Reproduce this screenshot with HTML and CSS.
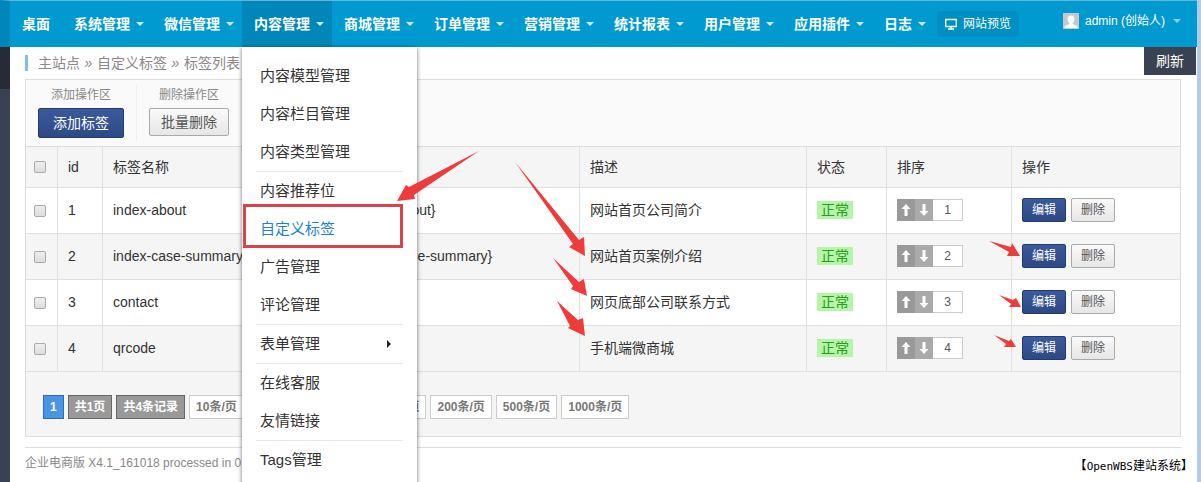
FILE: index.html
```
<!DOCTYPE html>
<html lang="zh-CN">
<head>
<meta charset="utf-8">
<title>标签列表</title>
<link rel="stylesheet" href="styles.css">
</head>
<body>
<div class="app">
  <header class="topbar">
    <nav class="nav">
      <a class="nav-link" href="#">桌面</a>
      <a class="nav-link has-menu" href="#">系统管理</a>
      <a class="nav-link has-menu" href="#">微信管理</a>
      <div class="nav-item">
        <a class="nav-link has-menu active" href="#">内容管理</a>
        <ul class="menu">
          <li><a href="#">内容模型管理</a></li>
          <li><a href="#">内容栏目管理</a></li>
          <li><a href="#">内容类型管理</a></li>
          <li class="divided"><a href="#">内容推荐位</a></li>
          <li class="marked"><a class="current" href="#">自定义标签</a></li>
          <li><a href="#">广告管理</a></li>
          <li><a href="#">评论管理</a></li>
          <li class="divided"><a class="submenu" href="#">表单管理</a></li>
          <li class="divided"><a href="#">在线客服</a></li>
          <li><a href="#">友情链接</a></li>
          <li class="divided"><a href="#">Tags管理</a></li>
        </ul>
      </div>
      <a class="nav-link has-menu" href="#">商城管理</a>
      <a class="nav-link has-menu" href="#">订单管理</a>
      <a class="nav-link has-menu" href="#">营销管理</a>
      <a class="nav-link has-menu" href="#">统计报表</a>
      <a class="nav-link has-menu" href="#">用户管理</a>
      <a class="nav-link has-menu" href="#">应用插件</a>
      <a class="nav-link has-menu" href="#">日志</a>
      <a class="preview" href="#">
        <svg width="12" height="12" viewBox="0 0 12 12" fill="none" stroke="currentColor"><path d="M.7 1.5h10.6v7H.7z" stroke-width="1.3"/><path d="M6 8.500v2M3 11h6" stroke-width="1.5"/></svg>
        网站预览
      </a>
    </nav>
    <a class="user" href="#">
      <svg width="16" height="16" viewBox="0 0 16 16"><path fill="#c4c8ca" d="M0 0h16v16H0z"/><path fill="#fff" d="M8 2.500c2.200 0 3.400 1.500 3.400 3.700 0 1.600-.8 2.900-1.700 3.600v1.200l4 1.800c.7.400.8 1.200.8 2.200h-13c0-1 .1-1.800.8-2.200l4-1.800V9.800C5.400 9.100 4.600 7.800 4.600 6.200 4.600 4 5.800 2.500 8 2.500z"/></svg>
      <span>admin (创始人)</span>
    </a>
  </header>
  <div class="body">
    <aside class="rail"></aside>
    <main class="content">
      <div class="heading">
        <div class="crumbs"><a href="#">主站点</a><i>»</i><a href="#">自定义标签</a><i>»</i><span>标签列表</span></div>
        <button class="refresh" type="button">刷新</button>
      </div>
      <section class="panel">
        <div class="toolbar">
          <div class="tool"><span>添加操作区</span><button class="btn primary large" type="button">添加标签</button></div>
          <div class="tool"><span>删除操作区</span><button class="btn medium" type="button">批量删除</button></div>
        </div>
        <table class="grid">
          <colgroup><col class="c-check"><col class="c-id"><col class="c-name"><col class="c-code"><col class="c-desc"><col class="c-state"><col class="c-sort"><col></colgroup>
          <thead>
            <tr><th><input type="checkbox" aria-label="全选"></th><th>id</th><th>标签名称</th><th></th><th>描述</th><th>状态</th><th>排序</th><th>操作</th></tr>
          </thead>
          <tbody>
            <tr><td><input type="checkbox" aria-label="1"></td><td>1</td><td>index-about</td><td>{index-about}</td><td>网站首页公司简介</td><td><span class="badge">正常</span></td>
              <td><div class="sort"><button type="button" aria-label="上移"><svg width="10" height="12" viewBox="0 0 10 12"><path d="M5 0l4.500 5H6.500v7h-3V5h-3z"/></svg></button><button type="button" aria-label="下移"><svg width="10" height="12" viewBox="0 0 10 12"><path d="M5 12L.5 7h3V0h3v7h3z"/></svg></button><input value="1" aria-label="排序"></div></td>
              <td><div class="actions"><button class="btn primary" type="button">编辑</button><button class="btn" type="button">删除</button></div></td></tr>
            <tr><td><input type="checkbox" aria-label="2"></td><td>2</td><td>index-case-summary</td><td>{index-case-summary}</td><td>网站首页案例介绍</td><td><span class="badge">正常</span></td>
              <td><div class="sort"><button type="button" aria-label="上移"><svg width="10" height="12" viewBox="0 0 10 12"><path d="M5 0l4.500 5H6.500v7h-3V5h-3z"/></svg></button><button type="button" aria-label="下移"><svg width="10" height="12" viewBox="0 0 10 12"><path d="M5 12L.5 7h3V0h3v7h3z"/></svg></button><input value="2" aria-label="排序"></div></td>
              <td><div class="actions"><button class="btn primary" type="button">编辑</button><button class="btn" type="button">删除</button></div></td></tr>
            <tr><td><input type="checkbox" aria-label="3"></td><td>3</td><td>contact</td><td>{contact}</td><td>网页底部公司联系方式</td><td><span class="badge">正常</span></td>
              <td><div class="sort"><button type="button" aria-label="上移"><svg width="10" height="12" viewBox="0 0 10 12"><path d="M5 0l4.500 5H6.500v7h-3V5h-3z"/></svg></button><button type="button" aria-label="下移"><svg width="10" height="12" viewBox="0 0 10 12"><path d="M5 12L.5 7h3V0h3v7h3z"/></svg></button><input value="3" aria-label="排序"></div></td>
              <td><div class="actions"><button class="btn primary" type="button">编辑</button><button class="btn" type="button">删除</button></div></td></tr>
            <tr><td><input type="checkbox" aria-label="4"></td><td>4</td><td>qrcode</td><td>{qrcode}</td><td>手机端微商城</td><td><span class="badge">正常</span></td>
              <td><div class="sort"><button type="button" aria-label="上移"><svg width="10" height="12" viewBox="0 0 10 12"><path d="M5 0l4.500 5H6.500v7h-3V5h-3z"/></svg></button><button type="button" aria-label="下移"><svg width="10" height="12" viewBox="0 0 10 12"><path d="M5 12L.5 7h3V0h3v7h3z"/></svg></button><input value="4" aria-label="排序"></div></td>
              <td><div class="actions"><button class="btn primary" type="button">编辑</button><button class="btn" type="button">删除</button></div></td></tr>
          </tbody>
        </table>
        <div class="pager">
          <a class="page" href="#">1</a><span class="total">共1页</span><span class="total">共4条记录</span>
          <a href="#">10条/页</a><a href="#">20条/页</a><a href="#">50条/页</a><a href="#">100条/页</a><a href="#">200条/页</a><a href="#">500条/页</a><a href="#">1000条/页</a>
        </div>
      </section>
      <footer class="footer">
        <span>企业电商版 X4.1_161018 processed in 0</span>
        <strong class="brand">【<span>OpenWBS</span>建站系统】</strong>
      </footer>
    </main>
  </div>
  <svg class="arrows" width="1201" height="482" viewBox="0 0 1201 482" aria-hidden="true">
    <path d="M479 151L409 187 406 185 397 201 415 199 414 195z"/>
    <path d="M515 162L573 244 569 247 585 256 584 237 579 240z"/>
    <path d="M553 258L573 286 571 289 587 296 584 279 579 282z"/>
    <path d="M557 301L570 326 568 328 585 336 583 318 578 320z"/>
    <path d="M989 241L1009 252 1007 256 1020 256 1012 243 1011 247z"/>
    <path d="M999 295L1011 304 1009 307 1021 307 1016 298 1013 300z"/>
    <path d="M994 335L1006 344 1004 347 1016 347 1011 339 1009 341z"/>
  </svg>
</div>
</body>
</html>
```
FILE: styles.css
```
* { box-sizing: border-box; }

body {
  margin: 0;
  background: #fff;
  color: #333;
  font: 14px/20px "Liberation Sans", "Noto Sans CJK SC", sans-serif;
}

a { color: inherit; text-decoration: none; }
button, input { font: inherit; margin: 0; }

.app {
  position: relative;
  display: flex;
  flex-direction: column;
  height: 100vh;
  overflow: hidden;
  border-right: 4px solid #b3cbe6;
}

.topbar {
  display: flex;
  justify-content: space-between;
  height: 47px;
  flex: none;
  border-top: 1px solid #62b5d6;
  border-left: 10px solid #0086b8;
  background: #0099d0;
  color: #fff;
}

.nav { display: flex; }
.nav-item { position: relative; }

.nav-link {
  display: flex;
  align-items: center;
  gap: 6px;
  height: 46px;
  padding: 0 12px;
  font-weight: bold;
  white-space: nowrap;
}

.has-menu { padding-right: 8px; }
.has-menu::after,
.user::after {
  content: "";
  border: 4px solid transparent;
  border-top-color: #cdebf7;
  border-bottom: 0;
}
.active { background: #0087b9; }

.preview {
  display: flex;
  align-items: center;
  align-self: center;
  gap: 6px;
  height: 26px;
  margin-left: 3px;
  padding: 0 8px;
  border-radius: 3px;
  background: #008fc3;
  font-size: 12px;
  white-space: nowrap;
}

.user {
  display: flex;
  align-items: center;
  gap: 6px;
  height: 40px;
  padding-right: 16px;
  font-size: 12px;
  white-space: nowrap;
}
.user::after { margin-left: 2px; border-top-color: #8fd0ea; }

.menu {
  position: absolute;
  z-index: 2;
  top: 46px;
  left: 0;
  width: 175px;
  margin: 0;
  padding: 10px 0;
  background: #fff;
  box-shadow: 0 1px 4px rgba(0, 0, 0, .6);
  color: #333;
  font-size: 15px;
  list-style: none;
}
.menu li { padding: 0 14px; }
.menu a { display: block; padding: 0 4px; line-height: 38px; }
.menu .divided a { border-top: 1px solid #e8e8e8; }
.menu .current { color: #1b82cc; }
.menu .submenu { display: flex; align-items: center; justify-content: space-between; padding-right: 12px; }
.submenu::after {
  content: "";
  border: 4px solid transparent;
  border-left-color: #222;
  border-right: 0;
}
.marked { position: relative; }
.marked::after {
  content: "";
  position: absolute;
  inset: -6px 14px 0 1px;
  border: 3px solid #d9434a;
}

.body { display: flex; flex: 1; min-height: 0; }
.rail { flex: none; width: 10px; background: linear-gradient(#272b36 42px, #3a4150 42px); }
.content { flex: 1; min-width: 0; padding-right: 16px; padding-left: 15px; }

.heading { display: flex; justify-content: space-between; height: 32px; margin-right: -15px; }
.crumbs {
  height: 16px;
  margin-top: 8px;
  padding-left: 10px;
  border-left: 3px solid #7cc3dc;
  color: #888;
  line-height: 16px;
}
.crumbs i { display: inline-block; width: 17px; text-align: center; }
.refresh { height: 28px; padding: 0 12px; border: 0; background: #3a4150; color: #fff; }

.panel { border: 1px solid #ddd; background: #f5f5f5; }
.toolbar { display: flex; height: 66px; padding: 5px 0; background: #fafafa; }
.tool {
  display: flex;
  flex-direction: column;
  align-items: center;
  gap: 3px;
  padding: 0 12px;
  color: #888;
  font-size: 12px;
}
.tool + .tool { border-left: 1px solid #eee; }

.btn {
  height: 24px;
  padding: 0 9px;
  border: 1px solid #aaa;
  border-radius: 2px;
  background: linear-gradient(#fafafa, #e6e6e6);
  color: #555;
  font-size: 12px;
  line-height: 20px;
}
.primary { border-color: #233c70; background: linear-gradient(#3b5a9c, #2d4985); color: #fff; }
.large { height: 30px; padding: 0 14px; font-size: 14px; }
.medium { height: 28px; padding: 0 11px; font-size: 14px; }

.grid { width: 100%; border-spacing: 0; table-layout: fixed; }
.c-check { width: 32px; }
.c-id { width: 45px; }
.c-name { width: 240px; }
.c-code { width: 237px; }
.c-desc { width: 227px; }
.c-state { width: 80px; }
.c-sort { width: 125px; }
.grid th,
.grid td {
  height: 46px;
  padding: 0 10px;
  border-bottom: 1px solid #e0e0e0;
  border-right: 1px solid #e0e0e0;
  text-align: left;
  font-weight: normal;
  white-space: nowrap;
}
.grid th { height: 42px; border-top: 1px solid #ddd; }
.grid td { padding-bottom: 2px; }
.grid th:last-child, .grid td:last-child { border-right: 0; }
.grid th:first-child, .grid td:first-child { padding: 0 8px; }
.grid tbody tr:nth-child(odd) { background: #fff; }
.grid input[type="checkbox"] {
  appearance: none;
  display: block;
  width: 12px;
  height: 12px;
  border: 1px solid #aaa;
  border-radius: 2px;
  background: linear-gradient(#eee, #ddd);
}

.badge { display: inline-block; padding: 0 4px; background: #b4f5a8; color: #2c9a1c; line-height: 18px; }

.sort { display: flex; }
.sort button {
  display: flex;
  align-items: center;
  justify-content: center;
  width: 18px;
  height: 22px;
  padding: 0;
  border: 0;
  background: #999;
  fill: #fff;
}
.sort button + button { background: #aaa; }
.sort input {
  width: 30px;
  height: 22px;
  padding: 0;
  border: 1px solid #ccc;
  border-left: 0;
  background: #fff;
  color: #555;
  font-size: 12px;
  text-align: center;
}
.actions { display: flex; gap: 5px; }

.pager { display: flex; gap: 4px; padding: 23px 17px 17px; }
.pager > * {
  height: 24px;
  padding: 0 6px;
  border: 1px solid #ccc;
  background: #fff;
  color: #777;
  font-size: 12px;
  font-weight: bold;
  line-height: 22px;
  white-space: nowrap;
}
.pager .page { border-color: #2b6cb8; background: #4a94e8; color: #fff; }
.pager .total { border-color: #666; background: #999; color: #fff; }

.footer {
  display: flex;
  justify-content: space-between;
  margin-top: 10px;
  padding-top: 5px;
  border-top: 1px solid #ddd;
  color: #888;
  font-size: 12px;
}
.brand { margin-right: -12px; padding-top: 3px; color: #000; font-weight: normal; }
.brand span { font-family: "DejaVu Sans Mono", monospace; font-size: 11px; }

.arrows { position: absolute; z-index: 3; top: 0; left: 0; fill: #ee3b3b; pointer-events: none; }
```
